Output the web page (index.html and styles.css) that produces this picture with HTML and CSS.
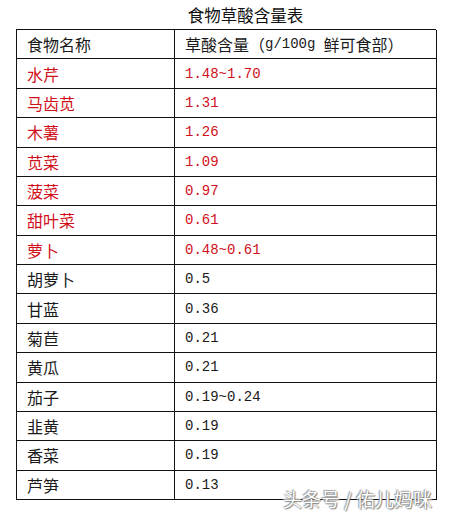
FILE: index.html
```html
<!DOCTYPE html>
<html lang="zh">
<head>
<meta charset="utf-8">
<title>食物草酸含量表</title>
<link rel="stylesheet" href="styles.css">
</head>
<body>
<div class="page">
  <div class="title">食物草酸含量表</div>
  <div class="table">
    <div class="cell name">食物名称</div><div class="cell val">草酸含量<span class="fw open">（</span><span class="num">g/100g</span><span class="gap"></span>鲜可食部<span class="fw close">）</span></div>
    <div class="cell name red">水芹</div><div class="cell val num red">1.48~1.70</div>
    <div class="cell name red">马齿苋</div><div class="cell val num red">1.31</div>
    <div class="cell name red">木薯</div><div class="cell val num red">1.26</div>
    <div class="cell name red">苋菜</div><div class="cell val num red">1.09</div>
    <div class="cell name red">菠菜</div><div class="cell val num red">0.97</div>
    <div class="cell name red">甜叶菜</div><div class="cell val num red">0.61</div>
    <div class="cell name red">萝卜</div><div class="cell val num red">0.48~0.61</div>
    <div class="cell name">胡萝卜</div><div class="cell val num">0.5</div>
    <div class="cell name">甘蓝</div><div class="cell val num">0.36</div>
    <div class="cell name">菊苣</div><div class="cell val num">0.21</div>
    <div class="cell name">黄瓜</div><div class="cell val num">0.21</div>
    <div class="cell name">茄子</div><div class="cell val num">0.19~0.24</div>
    <div class="cell name">韭黄</div><div class="cell val num">0.19</div>
    <div class="cell name">香菜</div><div class="cell val num">0.19</div>
    <div class="cell name">芦笋</div><div class="cell val num">0.13</div>
  </div>
  <div class="watermark">头条号 / 佑儿妈咪</div>
</div>
</body>
</html>
```

FILE: styles.css
```css
html, body {
  margin: 0;
  padding: 0;
  background: #ffffff;
}
body {
  font-family: "Noto Sans CJK SC", "Noto Sans", sans-serif;
  color: #1a1a1a;
  text-spacing-trim: space-all;
}
.page {
  position: relative;
  width: 451px;
  height: 512px;
  overflow: hidden;
}
.title {
  height: 29px;
  line-height: 30px;
  font-size: 16.5px;
  text-align: center;
  padding-left: 40px;
  color: #111;
}
.table {
  margin-left: 16px;
  width: 420px;
  display: grid;
  grid-template-columns: 158px 262px;
  grid-auto-rows: 29.375px;
  border-top: 1px solid #111;
  border-left: 1px solid #111;
  box-sizing: border-box;
}
.cell {
  border-right: 1px solid #111;
  border-bottom: 1px solid #111;
  display: flex;
  align-items: center;
  font-size: 16px;
  box-sizing: border-box;
  white-space: nowrap;
}
.name {
  padding-left: 10px;
}
.val {
  padding-left: 10px;
}
.fw {
  display: inline-block;
  width: 16px;
}
.open {
  text-align: right;
}
.close {
  text-align: left;
}
.gap {
  display: inline-block;
  width: 8px;
}
.num {
  font-family: "Liberation Mono", monospace;
  font-size: 14px;
}
.red {
  color: #d0101a;
}
.watermark {
  position: absolute;
  left: 283px;
  top: 485px;
  font-size: 19px;
  color: #ffffff;
  text-shadow: 0 0 1px #666, 1px 1px 1px #888, -1px -1px 1px #aaa;
}
```
